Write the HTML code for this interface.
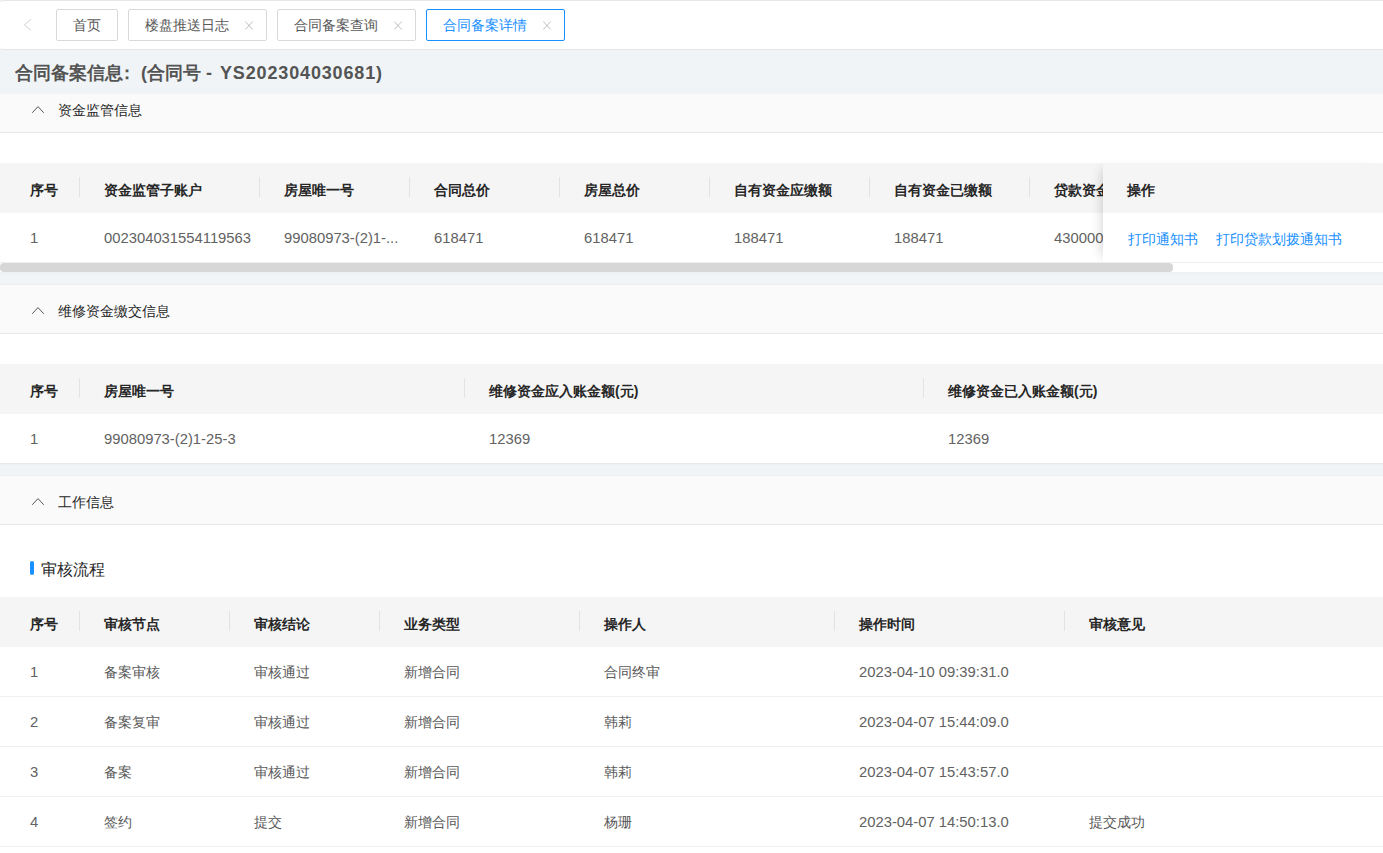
<!DOCTYPE html>
<html><head><meta charset="utf-8"><style>
html,body{margin:0;padding:0;}
body{width:1383px;height:853px;overflow:hidden;position:relative;background:#f0f4f7;font-family:"Liberation Sans", sans-serif;}
.r{position:absolute;box-sizing:content-box;}
.t{position:absolute;white-space:nowrap;}
.n{font-size:14.8px;color:#626262;}
</style></head><body>
<div class="r" style="left:0;top:0;width:1383px;height:48px;background:#fff;border-top:1px solid #e6e6e6;border-bottom:1px solid #e6e6e6;border-radius:3px 0 0 3px;"></div>
<svg class="r" style="left:22px;top:17px" width="14" height="16" viewBox="0 0 14 16"><path d="M9.1 2.3 L2.3 7.8 L9.1 13.3" fill="none" stroke="#cdd1d6" stroke-width="1"/></svg>
<div class="r" style="left:56px;top:9px;width:60px;height:30px;border:1px solid #d9d9d9;border-radius:2px;background:#fff"></div>
<div class="t" style="left:73px;top:14px;font-size:14px;color:#595959;line-height:22px;">首页</div>
<div class="r" style="left:128px;top:9px;width:137px;height:30px;border:1px solid #d9d9d9;border-radius:2px;background:#fff"></div>
<div class="t" style="left:145px;top:14px;font-size:14px;color:#595959;line-height:22px;">楼盘推送日志</div>
<svg class="r" style="left:245px;top:21px" width="9" height="9" viewBox="0 0 9 9"><path d="M0.3 0.5 L7.7 8.5 M7.7 0.5 L0.3 8.5" stroke="#b8b8b8" stroke-width="0.9"/></svg>
<div class="r" style="left:277px;top:9px;width:137px;height:30px;border:1px solid #d9d9d9;border-radius:2px;background:#fff"></div>
<div class="t" style="left:294px;top:14px;font-size:14px;color:#595959;line-height:22px;">合同备案查询</div>
<svg class="r" style="left:394px;top:21px" width="9" height="9" viewBox="0 0 9 9"><path d="M0.3 0.5 L7.7 8.5 M7.7 0.5 L0.3 8.5" stroke="#b8b8b8" stroke-width="0.9"/></svg>
<div class="r" style="left:426px;top:9px;width:137px;height:30px;border:1px solid #1890ff;border-radius:2px;background:#fff"></div>
<div class="t" style="left:443px;top:14px;font-size:14px;color:#1890ff;line-height:22px;">合同备案详情</div>
<svg class="r" style="left:543px;top:21px" width="9" height="9" viewBox="0 0 9 9"><path d="M0.3 0.5 L7.7 8.5 M7.7 0.5 L0.3 8.5" stroke="#b8b8b8" stroke-width="0.9"/></svg>
<div class="r" style="left:0px;top:84px;width:1383px;height:48px;background:#fafafa;"></div>
<div class="r" style="left:0px;top:132px;width:1383px;height:1px;background:#e4e8ed;"></div>
<svg class="r" style="left:31px;top:104px" width="14" height="10" viewBox="0 0 14 10"><path d="M1.2 8.8 L7 2.6 L12.8 8.8" fill="none" stroke="#4d4d4d" stroke-width="0.95"/></svg>
<div class="t" style="left:58px;top:97px;font-size:14px;color:#262626;line-height:26px;">资金监管信息</div>
<div class="r" style="left:0px;top:133px;width:1383px;height:140px;background:#fff;"></div>
<div class="r" style="left:0px;top:163px;width:1383px;height:50px;background:#f5f5f5;"></div>
<div class="r" style="left:79px;top:177px;width:1px;height:20px;background:#e3e3e3;"></div>
<div class="r" style="left:259px;top:177px;width:1px;height:20px;background:#e3e3e3;"></div>
<div class="r" style="left:409px;top:177px;width:1px;height:20px;background:#e3e3e3;"></div>
<div class="r" style="left:559px;top:177px;width:1px;height:20px;background:#e3e3e3;"></div>
<div class="r" style="left:709px;top:177px;width:1px;height:20px;background:#e3e3e3;"></div>
<div class="r" style="left:869px;top:177px;width:1px;height:20px;background:#e3e3e3;"></div>
<div class="r" style="left:1029px;top:177px;width:1px;height:20px;background:#e3e3e3;"></div>
<div class="t" style="left:30px;top:177px;font-size:14px;color:#262626;font-weight:bold;line-height:26px;">序号</div>
<div class="t" style="left:104px;top:177px;font-size:14px;color:#262626;font-weight:bold;line-height:26px;">资金监管子账户</div>
<div class="t" style="left:284px;top:177px;font-size:14px;color:#262626;font-weight:bold;line-height:26px;">房屋唯一号</div>
<div class="t" style="left:434px;top:177px;font-size:14px;color:#262626;font-weight:bold;line-height:26px;">合同总价</div>
<div class="t" style="left:584px;top:177px;font-size:14px;color:#262626;font-weight:bold;line-height:26px;">房屋总价</div>
<div class="t" style="left:734px;top:177px;font-size:14px;color:#262626;font-weight:bold;line-height:26px;">自有资金应缴额</div>
<div class="t" style="left:894px;top:177px;font-size:14px;color:#262626;font-weight:bold;line-height:26px;">自有资金已缴额</div>
<div class="t" style="left:1054px;top:177px;font-size:14px;color:#262626;font-weight:bold;line-height:26px;">贷款资金应缴额</div>
<div class="r" style="left:0px;top:213px;width:1383px;height:50px;background:#fff;"></div>
<div class="t" style="left:30px;top:225px;font-size:14px;color:#595959;line-height:26px;"><span class="n">1</span></div>
<div class="t" style="left:104px;top:225px;font-size:14px;color:#595959;line-height:26px;"><span class="n">002304031554119563</span></div>
<div class="t" style="left:284px;top:225px;font-size:14px;color:#595959;line-height:26px;"><span class="n">99080973-(2)1-...</span></div>
<div class="t" style="left:434px;top:225px;font-size:14px;color:#595959;line-height:26px;"><span class="n">618471</span></div>
<div class="t" style="left:584px;top:225px;font-size:14px;color:#595959;line-height:26px;"><span class="n">618471</span></div>
<div class="t" style="left:734px;top:225px;font-size:14px;color:#595959;line-height:26px;"><span class="n">188471</span></div>
<div class="t" style="left:894px;top:225px;font-size:14px;color:#595959;line-height:26px;"><span class="n">188471</span></div>
<div class="t" style="left:1054px;top:225px;font-size:14px;color:#595959;line-height:26px;"><span class="n">430000</span></div>
<div class="r" style="left:1103px;top:163px;width:280px;height:99px;background:#fff;box-shadow:-8px 0 10px -6px rgba(0,0,0,.15);"></div>
<div class="r" style="left:1103px;top:163px;width:280px;height:50px;background:#f5f5f5;"></div>
<div class="r" style="left:1103px;top:213px;width:280px;height:49px;background:#fff;"></div>
<div class="t" style="left:1127px;top:177px;font-size:14px;color:#262626;font-weight:bold;line-height:26px;">操作</div>
<div class="t" style="left:1128px;top:226px;font-size:14px;color:#1890ff;line-height:26px;">打印通知书</div>
<div class="t" style="left:1216px;top:226px;font-size:14px;color:#1890ff;line-height:26px;">打印贷款划拨通知书</div>
<div class="r" style="left:0px;top:262px;width:1383px;height:1px;background:#eceef1;"></div>
<div class="r" style="left:0px;top:263px;width:1383px;height:9px;background:#fff;"></div>
<div class="r" style="left:0px;top:263px;width:1173px;height:9px;background:#d7d7d7;border-radius:4px;"></div>
<div class="r" style="left:0px;top:272px;width:1383px;height:1px;background:#eef0f3;"></div>
<div class="r" style="left:0px;top:273px;width:1383px;height:1px;background:#eff0f2;"></div>
<div class="r" style="left:0px;top:284px;width:1383px;height:1px;background:#ededed;"></div>
<div class="r" style="left:0px;top:285px;width:1383px;height:48px;background:#fafafa;"></div>
<div class="r" style="left:0px;top:333px;width:1383px;height:1px;background:#e4e8ed;"></div>
<svg class="r" style="left:31px;top:305px" width="14" height="10" viewBox="0 0 14 10"><path d="M1.2 8.8 L7 2.6 L12.8 8.8" fill="none" stroke="#4d4d4d" stroke-width="0.95"/></svg>
<div class="t" style="left:58px;top:298px;font-size:14px;color:#262626;line-height:26px;">维修资金缴交信息</div>
<div class="r" style="left:0px;top:334px;width:1383px;height:30px;background:#fff;"></div>
<div class="r" style="left:0px;top:364px;width:1383px;height:50px;background:#f5f5f5;"></div>
<div class="r" style="left:79px;top:378px;width:1px;height:20px;background:#e3e3e3;"></div>
<div class="r" style="left:464px;top:378px;width:1px;height:20px;background:#e3e3e3;"></div>
<div class="r" style="left:923px;top:378px;width:1px;height:20px;background:#e3e3e3;"></div>
<div class="t" style="left:30px;top:378px;font-size:14px;color:#262626;font-weight:bold;line-height:26px;">序号</div>
<div class="t" style="left:104px;top:378px;font-size:14px;color:#262626;font-weight:bold;line-height:26px;">房屋唯一号</div>
<div class="t" style="left:489px;top:378px;font-size:14px;color:#262626;font-weight:bold;line-height:26px;">维修资金应入账金额(元)</div>
<div class="t" style="left:948px;top:378px;font-size:14px;color:#262626;font-weight:bold;line-height:26px;">维修资金已入账金额(元)</div>
<div class="r" style="left:0px;top:414px;width:1383px;height:50px;background:#fff;"></div>
<div class="r" style="left:0px;top:463px;width:1383px;height:1px;background:#efefef;"></div>
<div class="t" style="left:30px;top:426px;font-size:14px;color:#595959;line-height:26px;"><span class="n">1</span></div>
<div class="t" style="left:104px;top:426px;font-size:14px;color:#595959;line-height:26px;"><span class="n">99080973-(2)1-25-3</span></div>
<div class="t" style="left:489px;top:426px;font-size:14px;color:#595959;line-height:26px;"><span class="n">12369</span></div>
<div class="t" style="left:948px;top:426px;font-size:14px;color:#595959;line-height:26px;"><span class="n">12369</span></div>
<div class="r" style="left:0px;top:476px;width:1383px;height:48px;background:#fafafa;"></div>
<div class="r" style="left:0px;top:524px;width:1383px;height:1px;background:#e4e8ed;"></div>
<svg class="r" style="left:31px;top:496px" width="14" height="10" viewBox="0 0 14 10"><path d="M1.2 8.8 L7 2.6 L12.8 8.8" fill="none" stroke="#4d4d4d" stroke-width="0.95"/></svg>
<div class="t" style="left:58px;top:489px;font-size:14px;color:#262626;line-height:26px;">工作信息</div>
<div class="r" style="left:0px;top:525px;width:1383px;height:72px;background:#fff;"></div>
<div class="r" style="left:30px;top:561px;width:4px;height:14px;background:#1890ff;border-radius:2px;"></div>
<div class="t" style="left:41px;top:557px;font-size:16px;color:#262626;line-height:26px;">审核流程</div>
<div class="r" style="left:0px;top:597px;width:1383px;height:50px;background:#f5f5f5;"></div>
<div class="r" style="left:79px;top:611px;width:1px;height:20px;background:#e3e3e3;"></div>
<div class="r" style="left:229px;top:611px;width:1px;height:20px;background:#e3e3e3;"></div>
<div class="r" style="left:379px;top:611px;width:1px;height:20px;background:#e3e3e3;"></div>
<div class="r" style="left:579px;top:611px;width:1px;height:20px;background:#e3e3e3;"></div>
<div class="r" style="left:834px;top:611px;width:1px;height:20px;background:#e3e3e3;"></div>
<div class="r" style="left:1064px;top:611px;width:1px;height:20px;background:#e3e3e3;"></div>
<div class="t" style="left:30px;top:611px;font-size:14px;color:#262626;font-weight:bold;line-height:26px;">序号</div>
<div class="t" style="left:104px;top:611px;font-size:14px;color:#262626;font-weight:bold;line-height:26px;">审核节点</div>
<div class="t" style="left:254px;top:611px;font-size:14px;color:#262626;font-weight:bold;line-height:26px;">审核结论</div>
<div class="t" style="left:404px;top:611px;font-size:14px;color:#262626;font-weight:bold;line-height:26px;">业务类型</div>
<div class="t" style="left:604px;top:611px;font-size:14px;color:#262626;font-weight:bold;line-height:26px;">操作人</div>
<div class="t" style="left:859px;top:611px;font-size:14px;color:#262626;font-weight:bold;line-height:26px;">操作时间</div>
<div class="t" style="left:1089px;top:611px;font-size:14px;color:#262626;font-weight:bold;line-height:26px;">审核意见</div>
<div class="r" style="left:0px;top:647px;width:1383px;height:50px;background:#fff;"></div>
<div class="r" style="left:0px;top:696px;width:1383px;height:1px;background:#efefef;"></div>
<div class="t" style="left:30px;top:659px;font-size:14px;color:#595959;line-height:26px;"><span class="n">1</span></div>
<div class="t" style="left:104px;top:659px;font-size:14px;color:#595959;line-height:26px;">备案审核</div>
<div class="t" style="left:254px;top:659px;font-size:14px;color:#595959;line-height:26px;">审核通过</div>
<div class="t" style="left:404px;top:659px;font-size:14px;color:#595959;line-height:26px;">新增合同</div>
<div class="t" style="left:604px;top:659px;font-size:14px;color:#595959;line-height:26px;">合同终审</div>
<div class="t" style="left:859px;top:659px;font-size:14px;color:#595959;line-height:26px;"><span class="n">2023-04-10 09:39:31.0</span></div>
<div class="t" style="left:1089px;top:659px;font-size:14px;color:#595959;line-height:26px;"></div>
<div class="r" style="left:0px;top:697px;width:1383px;height:50px;background:#fff;"></div>
<div class="r" style="left:0px;top:746px;width:1383px;height:1px;background:#efefef;"></div>
<div class="t" style="left:30px;top:709px;font-size:14px;color:#595959;line-height:26px;"><span class="n">2</span></div>
<div class="t" style="left:104px;top:709px;font-size:14px;color:#595959;line-height:26px;">备案复审</div>
<div class="t" style="left:254px;top:709px;font-size:14px;color:#595959;line-height:26px;">审核通过</div>
<div class="t" style="left:404px;top:709px;font-size:14px;color:#595959;line-height:26px;">新增合同</div>
<div class="t" style="left:604px;top:709px;font-size:14px;color:#595959;line-height:26px;">韩莉</div>
<div class="t" style="left:859px;top:709px;font-size:14px;color:#595959;line-height:26px;"><span class="n">2023-04-07 15:44:09.0</span></div>
<div class="t" style="left:1089px;top:709px;font-size:14px;color:#595959;line-height:26px;"></div>
<div class="r" style="left:0px;top:747px;width:1383px;height:50px;background:#fff;"></div>
<div class="r" style="left:0px;top:796px;width:1383px;height:1px;background:#efefef;"></div>
<div class="t" style="left:30px;top:759px;font-size:14px;color:#595959;line-height:26px;"><span class="n">3</span></div>
<div class="t" style="left:104px;top:759px;font-size:14px;color:#595959;line-height:26px;">备案</div>
<div class="t" style="left:254px;top:759px;font-size:14px;color:#595959;line-height:26px;">审核通过</div>
<div class="t" style="left:404px;top:759px;font-size:14px;color:#595959;line-height:26px;">新增合同</div>
<div class="t" style="left:604px;top:759px;font-size:14px;color:#595959;line-height:26px;">韩莉</div>
<div class="t" style="left:859px;top:759px;font-size:14px;color:#595959;line-height:26px;"><span class="n">2023-04-07 15:43:57.0</span></div>
<div class="t" style="left:1089px;top:759px;font-size:14px;color:#595959;line-height:26px;"></div>
<div class="r" style="left:0px;top:797px;width:1383px;height:50px;background:#fff;"></div>
<div class="r" style="left:0px;top:846px;width:1383px;height:1px;background:#efefef;"></div>
<div class="t" style="left:30px;top:809px;font-size:14px;color:#595959;line-height:26px;"><span class="n">4</span></div>
<div class="t" style="left:104px;top:809px;font-size:14px;color:#595959;line-height:26px;">签约</div>
<div class="t" style="left:254px;top:809px;font-size:14px;color:#595959;line-height:26px;">提交</div>
<div class="t" style="left:404px;top:809px;font-size:14px;color:#595959;line-height:26px;">新增合同</div>
<div class="t" style="left:604px;top:809px;font-size:14px;color:#595959;line-height:26px;">杨珊</div>
<div class="t" style="left:859px;top:809px;font-size:14px;color:#595959;line-height:26px;"><span class="n">2023-04-07 14:50:13.0</span></div>
<div class="t" style="left:1089px;top:809px;font-size:14px;color:#595959;line-height:26px;">提交成功</div>
<div class="r" style="left:0px;top:847px;width:1383px;height:6px;background:#fff;"></div>
<div class="r" style="left:0px;top:463px;width:1383px;height:1px;background:#e8eaee;"></div>
<div class="r" style="left:0px;top:464px;width:1383px;height:1px;background:#eff0f2;"></div>
<div class="r" style="left:0px;top:475px;width:1383px;height:1px;background:#ededed;"></div>
<div class="r" style="left:0px;top:50px;width:1383px;height:44px;background:#f0f4f7;"></div>
<div class="t" style="left:15px;top:60px;font-size:18px;color:#545454;font-weight:bold;line-height:26px;">合同备案信息</div>
<div class="t" style="left:118px;top:60px;font-size:18px;color:#545454;font-weight:bold;line-height:26px;">：</div>
<div class="t" style="left:141px;top:60px;font-size:18px;color:#545454;font-weight:bold;line-height:26px;">(合同号 - </div>
<div class="t" style="left:220px;top:60px;font-size:18px;color:#545454;font-weight:bold;line-height:26px;letter-spacing:0.85px;">YS202304030681)</div>
</body></html>
